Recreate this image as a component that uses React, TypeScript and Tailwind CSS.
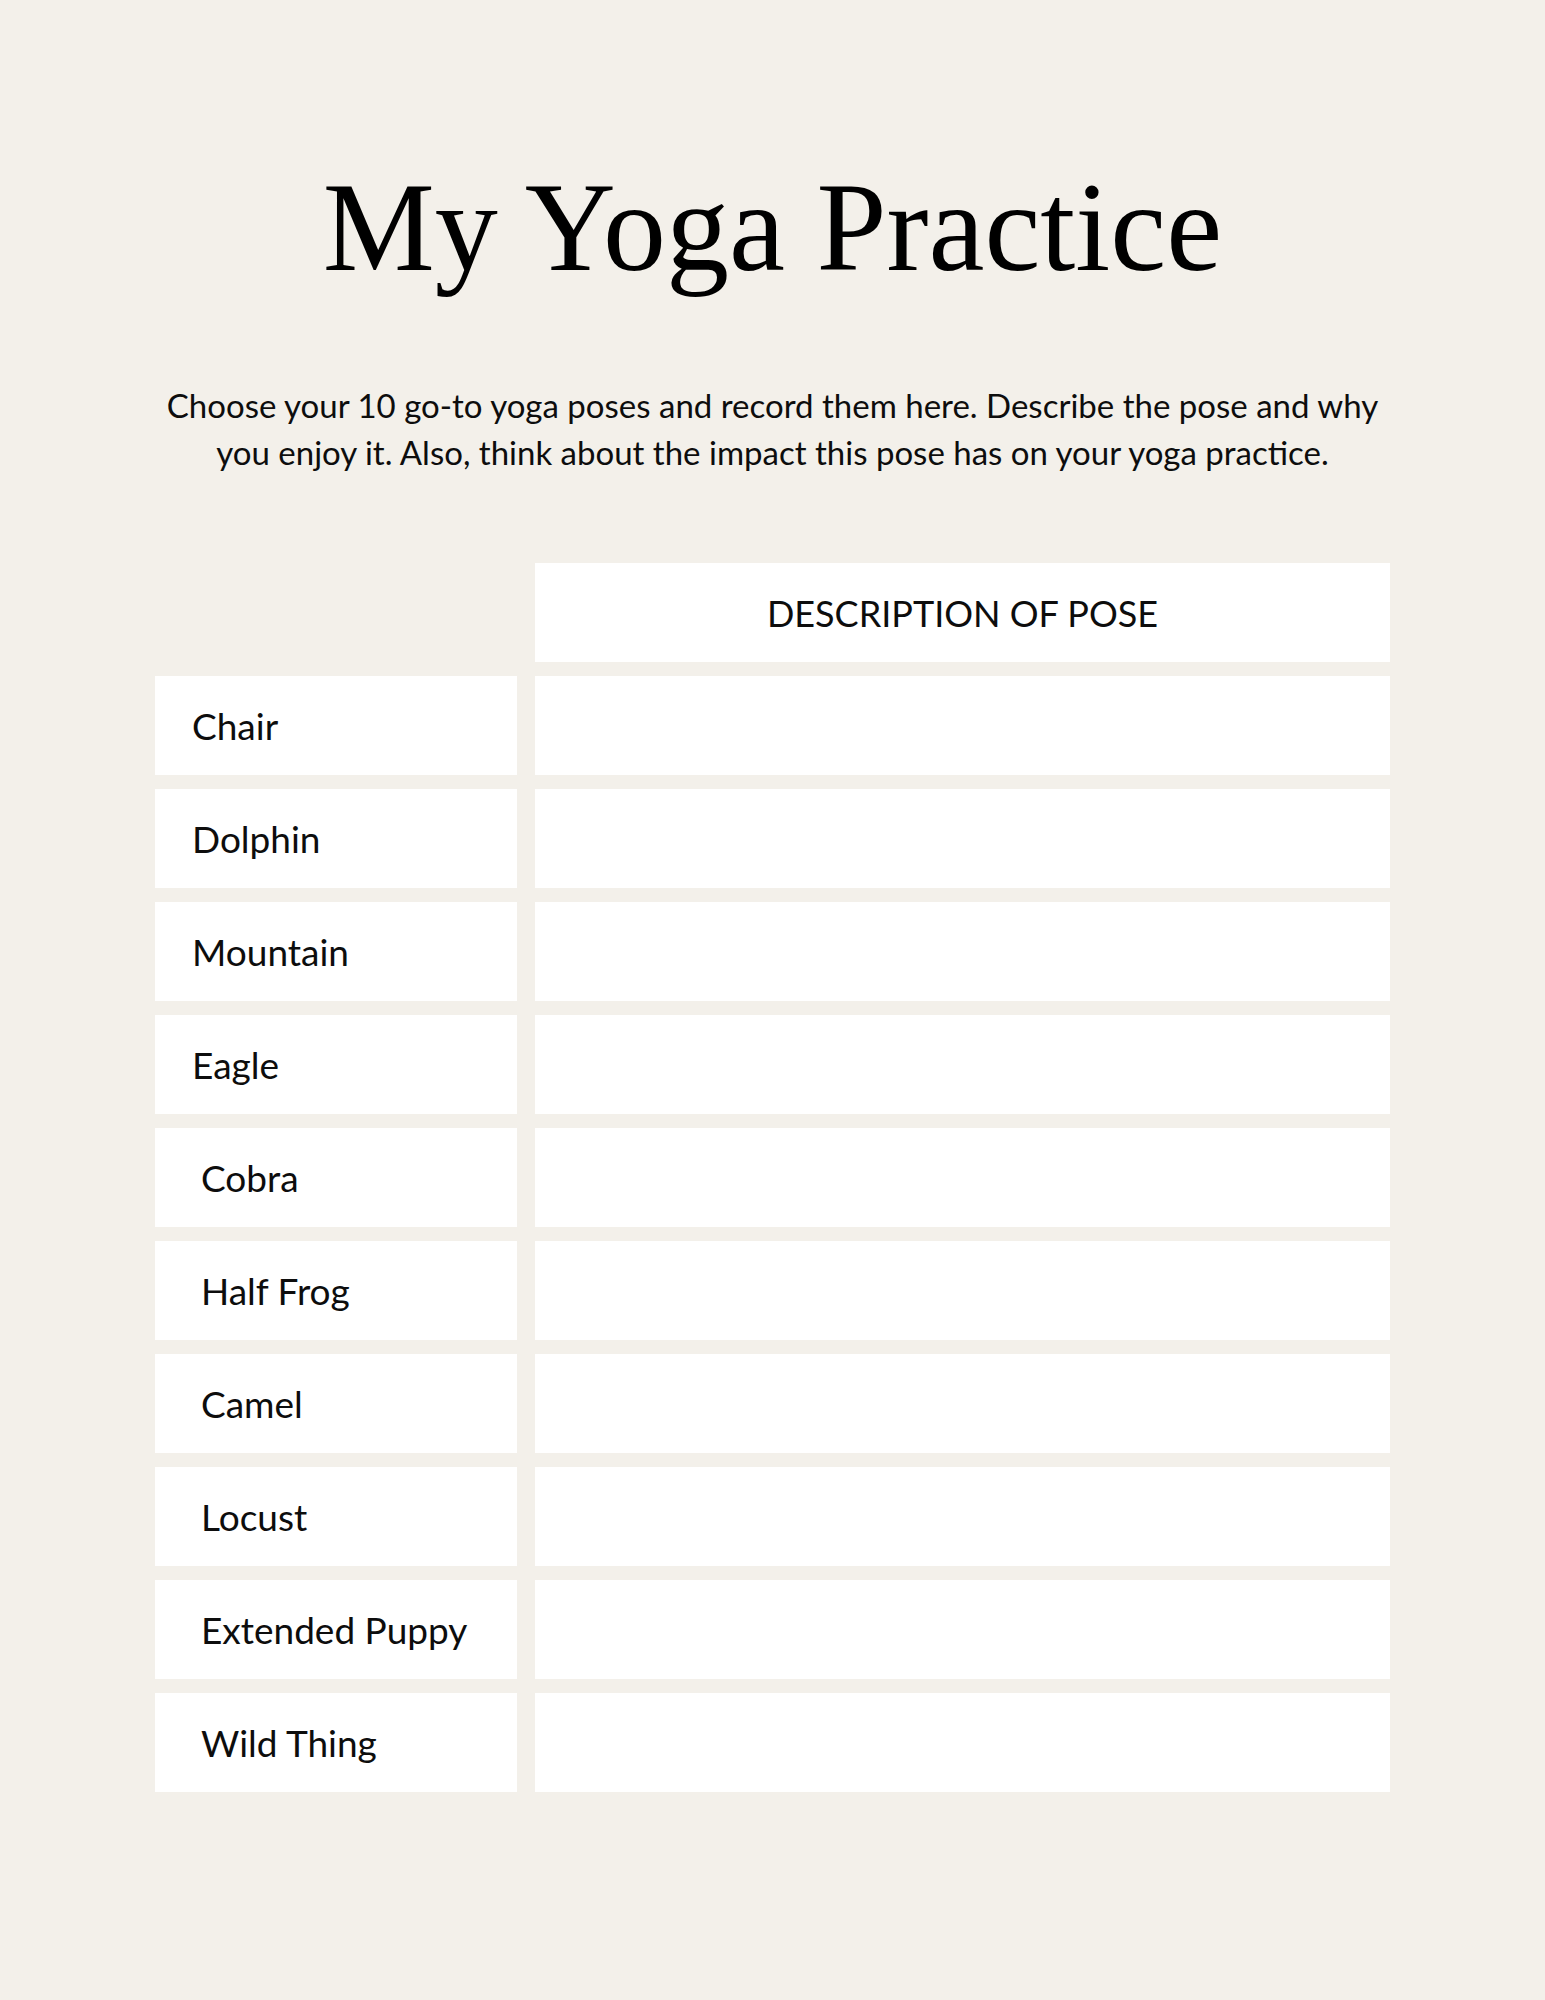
const poses = [
  { name: "Chair", indent: false },
  { name: "Dolphin", indent: false },
  { name: "Mountain", indent: false },
  { name: "Eagle", indent: false },
  { name: "Cobra", indent: true },
  { name: "Half Frog", indent: true },
  { name: "Camel", indent: true },
  { name: "Locust", indent: true },
  { name: "Extended Puppy", indent: true },
  { name: "Wild Thing", indent: true }
];

export default function App() {
  return (
    <div className="min-h-[2000px] bg-[#f3f0ea] text-[#0d0d0d]">
      <main className="mx-auto w-[1235px] pt-[165px]">
        <h1 className="text-center font-['Liberation_Serif',serif] text-[126px] leading-none text-black">
          My Yoga Practice
        </h1>

        <p className="mt-[91px] text-center font-['Lato',sans-serif] text-[33px] leading-[47px]">
          Choose your 10 go-to yoga poses and record them here. Describe the pose and why
          <br />
          you enjoy it. Also, think about the impact this pose has on your yoga practice.
        </p>

        <section className="mt-[87px] grid grid-cols-[362px_855px] gap-x-[18px] gap-y-[14px] font-['Lato',sans-serif]">
          <div />
          <div className="flex h-[99px] items-center justify-center bg-white text-[36px]">
            DESCRIPTION OF POSE
          </div>

          {poses.map((pose) => (
            <div key={pose.name} className="contents">
              <div
                className={
                  pose.indent
                    ? "flex h-[99px] items-center bg-white pl-[46px] text-[37px]"
                    : "flex h-[99px] items-center bg-white pl-[37px] text-[37px]"
                }
              >
                {pose.name}
              </div>
              <div className="h-[99px] bg-white" />
            </div>
          ))}
        </section>
      </main>
    </div>
  );
}
